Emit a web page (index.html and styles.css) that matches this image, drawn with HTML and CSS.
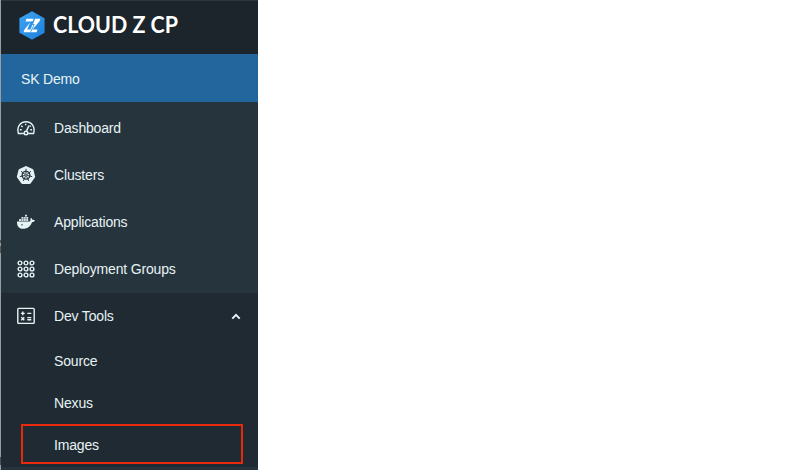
FILE: index.html
```html
<!DOCTYPE html>
<html lang="en">
<head>
<meta charset="utf-8">
<title>Cloud Z CP</title>
<link rel="stylesheet" href="styles.css">
</head>
<body>
<aside class="sidebar">
  <header class="brand">
    <svg class="brand-mark" viewBox="0 0 26 29">
      <defs><linearGradient id="hex" x1="0" y1="0" x2="1" y2="1"><stop offset="0" stop-color="#3fa5f2"/><stop offset="1" stop-color="#1c7fdc"/></linearGradient></defs>
      <path d="M13 .2 25.6 7.3V21.7L13 28.8.4 21.7V7.3z" fill="url(#hex)"/>
      <path d="M7.5 7.8H14.8L13.9 10.2H11.7L8.2 18.6H11.5L15.9 7.8H21.4L20.5 10.2 13.5 18.6H18.5L17.5 21.2H4.5L5.5 18.4 12 10.5H6.5z" fill="#fff"/>
      <path d="M15.4 8.2 13.3 13.5H15.2L11.7 20.8" fill="none" stroke="#2b91e8" stroke-width=".9"/>
    </svg>
    <svg class="brand-name" viewBox="0 0 140 34"><text x="-1" y="23" textLength="125" lengthAdjust="spacingAndGlyphs">CLOUD Z CP</text></svg>
  </header>
  <div class="tenant">SK Demo</div>
  <nav class="menu">
    <a class="item">
      <svg class="icon" viewBox="0 0 18 18" fill="none" stroke="currentColor" stroke-width="1.4">
        <path d="M6.8 14.5H1.4C-.5 8 3.3 2.8 9 2.8S18.5 8 16.6 14.5H11.2"/>
        <circle cx="9" cy="14" r="1.8"/>
        <path d="M9.5 12 12 6.5" stroke-width="1.6"/>
        <path d="M2.9 10.8H4.7M13.3 10.8H15.1M4.3 6.8 5.6 8M8.7 4.7V6.3M13.8 6.7 12.9 7.6"/>
      </svg>
      <span>Dashboard</span>
    </a>
    <a class="item">
      <svg class="icon" viewBox="0 0 18 18">
        <path d="M9 0 15.6 3.1Q16.4 3.5 16.6 4.4L18.2 11 13.8 17.2Q13.2 18 12.4 18H5.6Q4.8 18 4.2 17.2L-.2 11 1.4 4.4Q1.6 3.5 2.4 3.1z" fill="currentColor"/>
        <g fill="none" stroke="#26343d">
          <circle cx="9" cy="9.2" r="3.9" stroke-width="1.3"/>
          <path d="M9 2.8V7.9M4.1 5.3 8 8.4M13.9 5.3 10 8.4M2.8 10.6 7.8 9.5M15.2 10.6 10.2 9.5M6.3 14.9 8.4 10.3M11.7 14.9 9.6 10.3" stroke-width="1"/>
          <circle cx="9" cy="9.2" r=".9" stroke-width=".8"/>
        </g>
      </svg>
      <span>Clusters</span>
    </a>
    <a class="item">
      <svg class="icon" viewBox="0 0 18 18" fill="currentColor">
        <path d="M0 8.4H12.3Q13.3 8.3 13.5 7.8 12.8 6.1 14 4.8 15.3 5.8 15.3 6.8 16.8 6.5 18 7.3 17.2 9.3 15 9.3C13.3 13.8 10.2 15.8 6.2 15.8 2.1 15.8-.2 13.2 0 8.4z"/>
        <path d="M2 6.1H4V8H2zM4.4 6.1H6.4V8H4.4zM6.8 6.1H8.8V8H6.8zM9.2 6.1H11.2V8H9.2zM4.4 3.9H6.4V5.8H4.4zM6.8 3.9H8.8V5.8H6.8zM9.2 3.9H11.2V5.8H9.2zM8 1.7H10V3.6H8z" opacity=".9"/>
        <circle cx="5" cy="11.8" r=".7" fill="#26343d"/>
      </svg>
      <span>Applications</span>
    </a>
    <a class="item">
      <svg class="icon" viewBox="0 0 18 18" fill="none" stroke="currentColor" stroke-width="1.4">
        <circle cx="3" cy="3" r="1.9"/><circle cx="9" cy="3" r="1.9"/><circle cx="15" cy="3" r="1.9"/>
        <circle cx="3" cy="9" r="1.9"/><circle cx="9" cy="9" r="1.9"/><circle cx="15" cy="9" r="1.9"/>
        <circle cx="3" cy="15" r="1.9"/><circle cx="9" cy="15" r="1.9"/><circle cx="15" cy="15" r="1.9"/>
      </svg>
      <span>Deployment Groups</span>
    </a>
  </nav>
  <section class="group">
    <a class="item">
      <svg class="icon" viewBox="0 0 18 18" fill="none" stroke="currentColor" stroke-width="1.4">
        <rect x=".8" y="1.4" width="16.4" height="15" rx=".8"/>
        <path d="M3.9 6.4H7.7M5.8 4.5V8.3M10.3 6.4H14.3M10.3 10.6H14.3M10.3 12.8H14.3M4.3 10.2 7.3 13.2M7.3 10.2 4.3 13.2"/>
      </svg>
      <span>Dev Tools</span>
      <svg class="chevron" viewBox="0 0 10 8" fill="none" stroke="currentColor" stroke-width="2"><path d="M1.3 6.6 5 2.9 8.7 6.6"/></svg>
    </a>
    <a class="subitem">Source</a>
    <a class="subitem">Nexus</a>
    <a class="subitem marked">Images</a>
  </section>
</aside>
</body>
</html>
```
FILE: styles.css
```css
* { box-sizing: border-box; }
body {
  margin: 0;
  height: 470px;
  overflow: hidden;
  background: #fff;
  font: 14px/20px "Liberation Sans", Arial, sans-serif;
  letter-spacing: -0.17px;
  color: #e6f3f5;
}
.sidebar {
  display: flex;
  flex-direction: column;
  width: 258px;
  height: 470px;
  padding-left: 1px;
  background: linear-gradient(#9a9d9e 240px, #5c5a55 240px 243px, #9a9d9e 243px 246px, #5c5a55 246px 253px, #9a9d9e 253px 457px, #4c5052 457px 465px, #9a9d9e 465px);
}
.brand {
  display: flex;
  flex: none;
  align-items: flex-start;
  height: 54px;
  padding: 11px 0 0 18px;
  border-top: 1px solid #2b3740;
  background: #1c242c;
}
.brand-mark { width: 26px; height: 29px; margin-top: -1px; }
.brand-name {
  width: 140px;
  height: 34px;
  margin: -2px 0 0 9px;
  overflow: visible;
}
.brand-name text {
  font: bold 23px Lato, sans-serif;
  letter-spacing: 0;
  fill: #fff;
}
.tenant {
  flex: none;
  height: 48px;
  padding: 15px 20px 0;
  background: #23669e;
}
.menu {
  flex: none;
  height: 191px;
  padding-top: 2px;
  background: #26343d;
}
.item {
  display: flex;
  align-items: center;
  height: 47px;
  padding: 0 17px 0 16px;
}
.icon { width: 18px; height: 18px; margin-right: 19px; overflow: visible; }
.chevron { width: 10px; height: 8px; margin-left: auto; }
.group {
  flex: 1;
  background: #202a32;
  border-bottom: 3px solid #26343d;
}
.group .item { padding-bottom: 2px; }
.subitem {
  display: flex;
  align-items: center;
  height: 42px;
  padding-left: 53px;
}
.marked {
  height: 40px;
  width: 222px;
  margin-left: 20px;
  padding: 1px 0 0 31px;
  border: 2px solid #e8290b;
}
```
